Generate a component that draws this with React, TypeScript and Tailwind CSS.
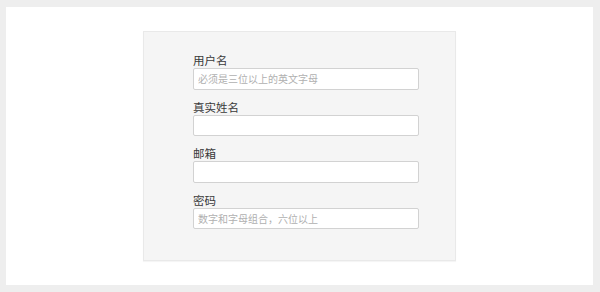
import React from "react";

const fields = [
  { label: "用户名", placeholder: "必须是三位以上的英文字母" },
  { label: "真实姓名", placeholder: "" },
  { label: "邮箱", placeholder: "" },
  { label: "密码", placeholder: "数字和字母组合，六位以上" },
];

export default function App() {
  return (
    <div
      className="w-[600px] h-[292px] bg-white border-[7px] border-l-[6px] border-[#eeeeee] flex items-center justify-center"
      style={{ fontFamily: '"Noto Sans CJK SC", "Noto Sans", sans-serif' }}
    >
      <div className="w-[313px] h-[230px] bg-[#f5f5f5] border border-[#e9e9e9] shadow-[0_1px_1px_rgba(0,0,0,0.04)] pt-[20px] pl-[49px] flex flex-col gap-[9px]">
        {fields.map((f) => (
          <div key={f.label} className="flex flex-col">
            <label className="text-[11.5px] leading-[16px] text-[#3a3a3a]">{f.label}</label>
            <input
              type="text"
              placeholder={f.placeholder}
              className="w-[226px] h-[21.5px] bg-white border border-[#d2d2d2] rounded-[2px] px-[4px] text-[10px] text-[#333] placeholder:text-[#b0b0b0] outline-none"
            />
          </div>
        ))}
      </div>
    </div>
  );
}
